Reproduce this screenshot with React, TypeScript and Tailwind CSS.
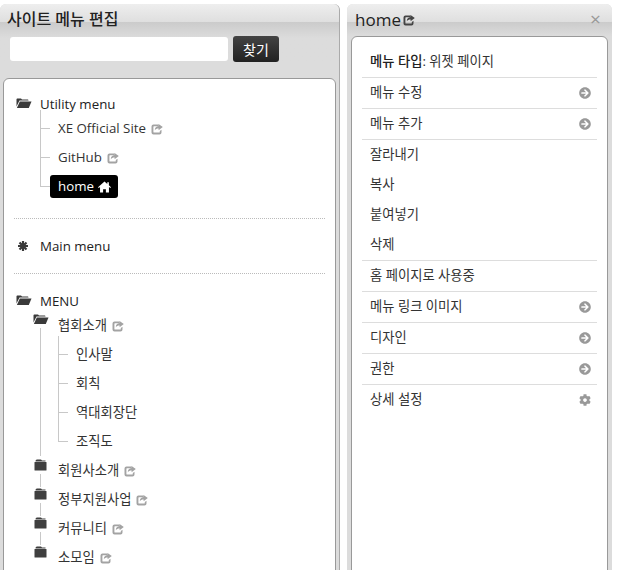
import { FaArrowCircleRight, FaCog } from 'react-icons/fa';

const font = { fontFamily: '"Open Sans", "Noto Sans CJK KR", sans-serif' };

function ShareIcon({ className }: { className: string }) {
  return (
    <svg viewBox="0 0 12 12" className={className} fill="currentColor">
      <path d="M2.5 1.5h5.2v1.7H3a.6.6 0 0 0-.6.6v5.2c0 .3.3.6.6.6h5.2c.3 0 .6-.3.6-.6V8l1.7-1.3v2.8a2 2 0 0 1-2 2H2.5a2 2 0 0 1-2-2V3.5a2 2 0 0 1 2-2z" />
      <path d="M7.6 1l4.2 3.1-4.2 3.1V5.4c-1.8 0-3 .5-3.8 1.9 0-2.500 1.500-4 3.800-4.300z" />
    </svg>
  );
}

function Share() {
  return <ShareIcon className="ml-[5px] h-[12px] w-[12px] text-[#a3a3a3]" />;
}

function FolderOpen({ className }: { className: string }) {
  return (
    <svg viewBox="0 0 16 12" className={className} fill="#3a3a3a">
      <path d="M0.500 2.500C0.500 1.800 1 1.500 1.500 1.500H5l1 1h5.500c.5 0 1 .4 1 1H3.500L0.500 9.500z" />
      <path d="M3.800 4.500h11.700l-2.700 6.500H.900z" />
    </svg>
  );
}

function FolderClosed({ className }: { className: string }) {
  return (
    <svg viewBox="0 0 13 12" className={className} fill="#3f3f3f">
      <path d="M3 0.500h4l1 1h3.500v1H1.500C1.500 1.300 2 .5 3 .5z" />
      <rect x="0.500" y="3" width="12" height="8.500" rx="0.500" />
    </svg>
  );
}

function HomeIcon() {
  return (
    <svg viewBox="0 0 14 12" className="ml-[4px] h-[12px] w-[13px]" fill="currentColor">
      <path d="M7 0L0 6.200l.8.9 1.400-1.200V12h3.300V8.500h3V12h3.300V5.900l1.400 1.200.8-.9-2.300-2V1h-1.700v1.700z" />
    </svg>
  );
}

function AsteriskIcon() {
  return (
    <svg viewBox="0 0 10 10" className="absolute left-[4px] top-[9px] h-[10px] w-[10px]" stroke="#3a3a3a" strokeWidth="2.200" fill="#3a3a3a">
      <path d="M5 0v10M0 5h10M1.500 1.500l7 7M8.500 1.500l-7 7" />
    </svg>
  );
}

function Leaf({ label, link = true, first = false }: { label: string; link?: boolean; first?: boolean }) {
  return (
    <div className="relative flex h-[29px] items-center pl-[18px] text-[13.3px] text-[#333]">
      <span className={`absolute left-0 w-px bg-[#c8c8c8] ${first ? 'top-[-4px] h-[19px]' : 'top-[-14px] h-[29px]'}`} />
      <span className="absolute left-0 top-[14px] h-px w-[10px] bg-[#c8c8c8]" />
      {label}
      {link && <Share />}
    </div>
  );
}

function SubFolder({ label, last = false }: { label: string; last?: boolean }) {
  return (
    <div className="relative flex h-[29px] items-center pl-[24px] text-[13.3px] text-[#333]">
      <FolderClosed className="absolute left-0 top-[3px] h-[12px] w-[13px]" />
      {!last && <span className="absolute left-[6px] top-[18px] h-[13px] w-px bg-[#c8c8c8]" />}
      {label}
      <Share />
    </div>
  );
}

function Row({ label, icon, border = true, bold }: { label: string; icon?: 'arrow' | 'gear'; border?: boolean; bold?: string }) {
  return (
    <div className={`flex items-center justify-between text-[13.3px] text-[#333] ${border ? 'h-[31px] border-b border-[#ddd]' : 'h-[30px]'}`}>
      <span className="pl-[8px]">
        {bold && <span className="font-medium text-[#222]">{bold}</span>}
        {label}
      </span>
      {icon === 'arrow' && <FaArrowCircleRight className="mr-[6px] text-[12px] text-[#999]" />}
      {icon === 'gear' && <FaCog className="mr-[6px] text-[12px] text-[#999]" />}
    </div>
  );
}

export default function App() {
  return (
    <div style={font} className="relative flex h-[570px] w-[618px] gap-[7px] overflow-hidden bg-white pt-[4px]">
      {/* left panel */}
      <div className="flex h-[600px] w-[340px] flex-col rounded-t-[6px] border-r border-[#aaa] bg-[#dcdcdc]">
        <div className="h-[18px] shrink-0 rounded-t-[6px] bg-gradient-to-b from-[#eeeeee] to-[#dfdfdf]" />
        <h1 className="absolute left-[7px] top-[7px] text-[16px] font-medium leading-[24px] text-[#222]">사이트 메뉴 편집</h1>
        <div className="flex items-center gap-[5px] bg-gradient-to-b from-[#cbcbcb] to-[#dcdcdc] to-[40%] pl-[10px] pt-[14px]">
          <input className="h-[24px] w-[218px] rounded-[3px] bg-white" />
          <button className="h-[26px] w-[46px] rounded-[3px] bg-gradient-to-b from-[#444] to-[#222] text-[14px] text-white">찾기</button>
        </div>
        <div className="ml-[3px] mr-[3px] mt-[16px] flex-1 rounded-t-[6px] border border-[#999] bg-white pt-[11px]">
          <div className="px-[10px]">
            <div className="relative flex h-[29px] items-center pl-[26px] text-[13.3px] text-[#222]">
              <FolderOpen className="absolute left-[2px] top-[7px] h-[12px] w-[16px]" />
              Utility menu
            </div>
            <div className="ml-[26px] mt-[-5px]">
              <Leaf label="XE Official Site" first />
              <Leaf label="GitHub" />
              <div className="relative flex h-[29px] items-center text-[13.3px]">
                <span className="absolute left-0 top-[-14px] h-[29px] w-px bg-[#c8c8c8]" />
                <span className="absolute left-0 top-[14px] h-px w-[10px] bg-[#c8c8c8]" />
                <span className="ml-[10px] flex h-[23px] items-center rounded-[3px] bg-black pl-[8px] pr-[7px] text-white">
                  home
                  <HomeIcon />
                </span>
              </div>
            </div>
            <div className="mt-[17px] border-b border-dotted border-[#bbb]" />
            <div className="relative mt-[13px] flex h-[29px] items-center pl-[26px] text-[13.3px] text-[#222]">
              <AsteriskIcon />
              Main menu
            </div>
            <div className="mt-[12px] border-b border-dotted border-[#bbb]" />
            <div className="relative mt-[13px] flex h-[29px] items-center pl-[26px] text-[13.3px] text-[#222]">
              <FolderOpen className="absolute left-[2px] top-[7px] h-[12px] w-[16px]" />
              MENU
            </div>
            <div className="ml-[20px] mt-[-5px]">
              <div className="relative flex h-[29px] items-center pl-[24px] text-[13.3px] text-[#333]">
                <FolderOpen className="absolute left-[-1px] top-[2px] h-[12px] w-[16px]" />
                <span className="absolute left-[6px] top-[17px] h-[128px] w-px bg-[#c8c8c8]" />
                협회소개
                <Share />
              </div>
              <div className="ml-[24px]">
                <Leaf label="인사말" link={false} first />
                <Leaf label="회칙" link={false} />
                <Leaf label="역대회장단" link={false} />
                <Leaf label="조직도" link={false} />
              </div>
              <SubFolder label="회원사소개" />
              <SubFolder label="정부지원사업" />
              <SubFolder label="커뮤니티" />
              <SubFolder label="소모임" last />
            </div>
          </div>
        </div>
      </div>
      {/* right panel */}
      <div className="flex h-[600px] w-[265px] flex-col rounded-t-[6px] bg-[#dcdcdc]">
        <div className="h-[18px] shrink-0 rounded-t-[6px] bg-gradient-to-b from-[#eeeeee] to-[#dfdfdf]" />
        <div className="absolute left-[355px] top-[8px] flex items-center text-[17px] leading-[24px] text-[#222]">
          home
          <ShareIcon className="ml-[2px] h-[12px] w-[12px] text-[#444]" />
        </div>
        <div className="absolute left-[590px] top-[9px] text-[19px] leading-[20px] text-[#999]">×</div>
        <div className="h-[14px] shrink-0 bg-gradient-to-b from-[#cbcbcb] to-[#dcdcdc]" />
        <div className="mx-[4px] flex-1 rounded-t-[6px] border border-[#999] bg-white px-[10px] pt-[10px]">
          <Row bold="메뉴 타입" label=": 위젯 페이지" />
          <Row label="메뉴 수정" icon="arrow" />
          <Row label="메뉴 추가" icon="arrow" />
          <Row label="잘라내기" border={false} />
          <Row label="복사" border={false} />
          <Row label="붙여넣기" border={false} />
          <Row label="삭제" />
          <Row label="홈 페이지로 사용중" />
          <Row label="메뉴 링크 이미지" icon="arrow" />
          <Row label="디자인" icon="arrow" />
          <Row label="권한" icon="arrow" />
          <Row label="상세 설정" icon="gear" border={false} />
        </div>
      </div>
    </div>
  );
}
